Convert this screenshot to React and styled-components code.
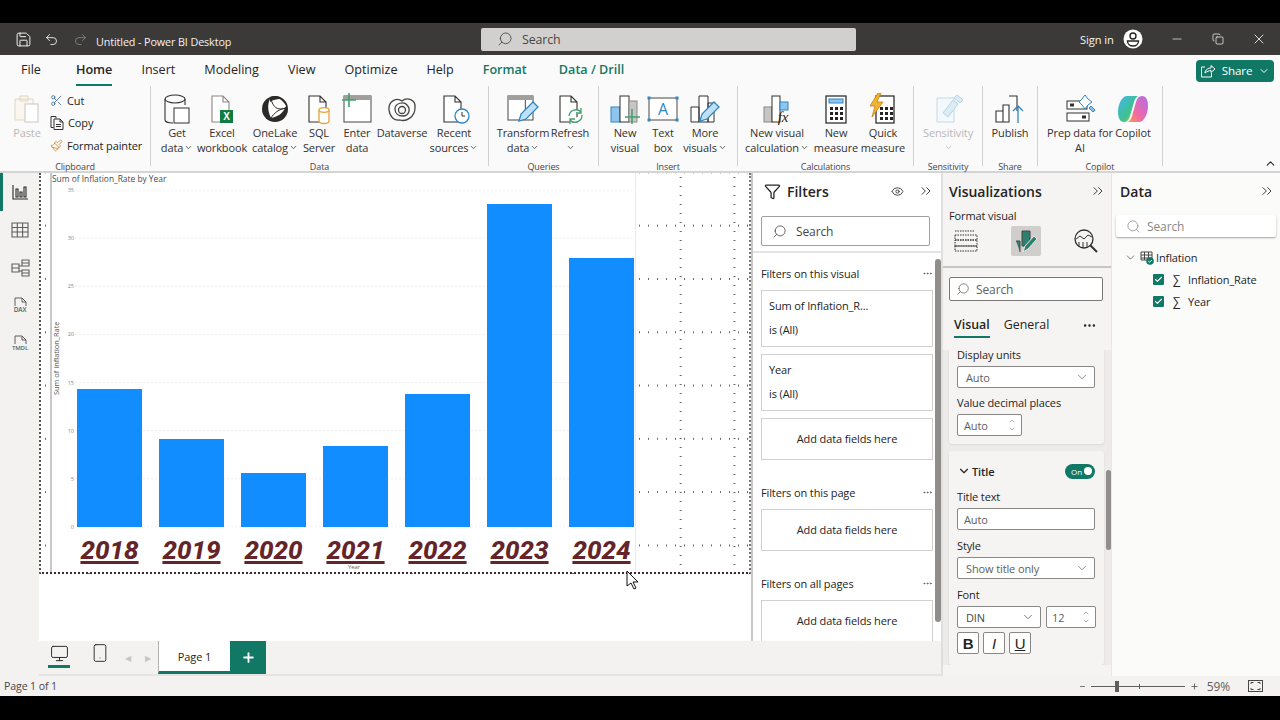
import styled, { createGlobalStyle } from 'styled-components'
import { Search, ChevronDown, ChevronUp, ChevronsRight, Minus, X, Copy, Scissors, Filter, Eye, Plus, Check, MoreHorizontal, Monitor, Smartphone, Undo2, Redo2, Save, Paintbrush } from 'lucide-react'

const green = '#117865'
const ui = '"Open Sans", "Noto Sans", sans-serif'

const GlobalStyle = createGlobalStyle`
  html, body { margin: 0; padding: 0; background: #000; }
  * { box-sizing: border-box; }
`

const Frame = styled.div`
  width: 1280px;
  height: 720px;
  background: #000;
  padding-top: 23px;
  font-family: ${ui};
  font-size: 11px;
  letter-spacing: -0.12px;
  color: #252423;
  display: flex;
  flex-direction: column;
  overflow: hidden;
`

/* title bar */
const TitleBar = styled.div`
  height: 32px;
  background: #3b3a39;
  display: flex;
  align-items: center;
  color: #f3f2f1;
  flex-shrink: 0;
`
const TitleLeft = styled.div`
  width: 481px;
  display: flex;
  align-items: center;
  padding-left: 15px;
`
const TitleIcon = styled.span`
  display: flex;
  width: ${p => p.$w || 29}px;
  opacity: ${p => (p.$dim ? 0.4 : 1)};
`
const TitleText = styled.span`
  margin: 5px 0 0 1px;
  font-size: 10.8px;
`
const TopSearch = styled.div`
  width: 375px;
  height: 23px;
  background: #d2d0ce;
  border-radius: 2px;
  display: flex;
  align-items: center;
  gap: 9px;
  padding-left: 16px;
  color: #484644;
  font-size: 12.4px;
`
const Flip = styled.span`
  display: flex;
  transform: scaleX(-1);
`
const TitleRight = styled.div`
  flex: 1;
  display: flex;
  align-items: center;
  padding-left: 224px;
  font-size: 11.2px;
  white-space: nowrap;
`
const Avatar = styled.svg`
  width: 20px;
  height: 20px;
  margin-left: 9px;
`
const WinBtn = styled.span`
  display: flex;
  justify-content: center;
  width: 41px;
  margin-left: ${p => (p.$first ? 14 : 0)}px;
`

/* tabs */
const TabRow = styled.div`
  height: 31px;
  background: #fafafa;
  display: flex;
  align-items: center;
  padding-left: 21px;
  flex-shrink: 0;
`
const Tab = styled.div`
  height: 31px;
  line-height: 30px;
  margin-right: ${p => p.$gap ?? 29}px;
  font-size: 12.6px;
  letter-spacing: 0;
  color: ${p => (p.$context ? green : '#252423')};
  font-weight: ${p => (p.$active || p.$context ? 600 : 400)};
  border-bottom: 2px solid ${p => (p.$active ? green : 'transparent')};
`
const ShareBtn = styled.div`
  margin-left: auto;
  margin-right: 6px;
  width: 78px;
  height: 22px;
  background: ${green};
  border-radius: 4px;
  color: #fff;
  display: flex;
  align-items: center;
  justify-content: center;
  gap: 6px;
  font-size: 11.6px;
`

/* ribbon */
const Ribbon = styled.div`
  height: 87px;
  background: #fafafa;
  border-bottom: 2px solid #d4d4d2;
  display: flex;
  flex-shrink: 0;
`
const Group = styled.div`
  width: ${p => p.$w}px;
  height: 80px;
  border-right: 1px solid #d2d0ce;
  display: flex;
  flex-direction: column;
  justify-content: space-between;
`
const GroupItems = styled.div`
  display: flex;
  padding-left: ${p => p.$pad || 0}px;
  padding-top: 7px;
`
const GroupLabel = styled.div`
  text-align: center;
  font-size: 9px;
  line-height: 12px;
  color: #484644;
  margin-bottom: -7px;
`
const RibbonBtn = styled.div`
  width: ${p => p.$w}px;
  display: flex;
  flex-direction: column;
  align-items: center;
  color: ${p => (p.$dim ? '#b9b8b6' : '#323130')};
  white-space: nowrap;
  line-height: 15px;
`
const RibbonIcon = styled.svg`
  width: 32px;
  height: 32px;
  flex-shrink: 0;
`
const BtnLine = styled.div`
  display: flex;
  align-items: center;
  gap: 1px;
  height: 15px;
`
const ClipRows = styled.div`
  display: flex;
  flex-direction: column;
  margin-top: -4px;
  padding-left: 4px;
`
const ClipRow = styled.div`
  height: 22.5px;
  display: flex;
  align-items: center;
  gap: 4px;
`
const CollapseBtn = styled.div`
  margin-left: auto;
  margin-right: 3px;
  align-self: flex-end;
  margin-bottom: 1px;
  display: flex;
`

/* body */
const Body = styled.div`
  height: 503px;
  display: flex;
  flex-shrink: 0;
`
const Rail = styled.div`
  width: 39px;
  background: #f3f2f1;
  display: flex;
  flex-direction: column;
`
const RailItem = styled.div`
  height: 38px;
  display: flex;
  align-items: center;
  justify-content: center;
  border-left: 3px solid ${p => (p.$active ? green : 'transparent')};
  padding-right: 3px;
`
const RailIcon = styled.svg`
  width: 22px;
  height: 22px;
`
const Center = styled.div`
  width: 902px;
  display: flex;
  flex-direction: column;
`
const Upper = styled.div`
  height: 468px;
  display: flex;
`
const Canvas = styled.div`
  width: 714px;
  background: #fff;
  border-right: 2px solid #c8c6c4;
`
const Page = styled.div`
  position: relative;
  height: 401px;
  padding-left: 9px;
  border-left: 2px dotted #555;
  border-right: 2px dotted #777;
  border-bottom: 2px dotted #3d2a30;
  background-color: #fff;
  background-image:
    radial-gradient(circle, #666 0.7px, transparent 1px),
    radial-gradient(circle, #666 0.7px, transparent 1px);
  background-size: 9px 53.3px, 53.8px 9px;
  background-position: 0 26px, 21px 0;
`
const Chart = styled.div`
  width: 586px;
  height: 399px;
  background: #fff;
  border-left: 2px solid #c8c8c8;
  border-right: 1px solid #e4ecf2;
  display: flex;
  flex-direction: column;
`
const ChartTitle = styled.div`
  height: 17px;
  font-size: 8.4px;
  line-height: 12px;
  letter-spacing: 0;
  font-weight: 500;
  color: #4a4a4a;
`
const ChartMain = styled.div`
  display: flex;
  height: 337px;
`
const AxisTitle = styled.div`
  writing-mode: vertical-rl;
  transform: rotate(180deg);
  width: 9px;
  font-size: 7.4px;
  line-height: 9px;
  letter-spacing: 0;
  font-weight: 500;
  text-align: center;
  color: #555;
`
const Ticks = styled.div`
  width: 10px;
  margin-left: 3px;
  display: flex;
  flex-direction: column;
  justify-content: space-between;
  margin-top: -4px;
  height: 345px;
`
const Tick = styled.div`
  font-size: 5.6px;
  line-height: 8px;
  color: #8a8a8a;
  text-align: right;
`
const Plot = styled.div`
  height: 337px;
  display: grid;
  grid-template-columns: repeat(7, 65px);
  column-gap: 17px;
  align-items: end;
  padding-left: 3px;
  width: 570px;
  background-image: radial-gradient(circle, #ececec 0.6px, transparent 0.8px);
  background-size: 4px 48.14px;
  background-position: 0 -24px;
`
const Bar = styled.div`
  background: #118dff;
`
const YearRow = styled.div`
  display: grid;
  grid-template-columns: repeat(7, 65px);
  column-gap: 17px;
  padding-left: 25px;
  margin-top: 10px;
`
const YearLabel = styled.div`
  font-family: Roboto, sans-serif;
  font-size: 26px;
  line-height: 26px;
  letter-spacing: 0;
  font-weight: 800;
  font-style: italic;
  text-decoration: underline;
  text-decoration-thickness: 3px;
  text-underline-offset: 2px;
  color: #642429;
  text-align: center;
  white-space: nowrap;
`
const XTitle = styled.div`
  font-size: 6px;
  line-height: 6px;
  margin-top: 1px;
  text-align: center;
  color: #666;
  padding-left: 21px;
`
const Pointer = styled.svg`
  position: absolute;
  left: 585px;
  top: 397px;
  width: 13px;
  height: 20px;
`

/* page tabs */
const PageTabs = styled.div`
  height: 35px;
  background: #f3f2f1;
  border-bottom: 2px solid #e6e4e2;
  display: flex;
  align-items: flex-start;
`
const ViewBtn = styled.div`
  width: ${p => p.$w}px;
  height: 27px;
  margin-left: ${p => p.$ml || 0}px;
  margin-right: ${p => p.$mr || 0}px;
  display: flex;
  align-items: center;
  justify-content: center;
  border-bottom: 3px solid ${p => (p.$active ? green : 'transparent')};
`
const Arrow = styled.div`
  width: 20px;
  height: 33px;
  display: flex;
  align-items: center;
  justify-content: center;
  color: #c8c6c4;
  font-size: 8px;
`
const PageTab = styled.div`
  width: 72px;
  height: 33px;
  background: #fff;
  border-left: 1px solid #b5b3b1;
  border-bottom: 3px solid ${green};
  display: flex;
  align-items: center;
  justify-content: center;
  font-size: 11px;
  font-weight: 500;
`
const AddPage = styled.div`
  width: 36px;
  height: 33px;
  background: ${green};
  color: #fff;
  display: flex;
  align-items: center;
  justify-content: center;
`

/* filters */
const Filters = styled.div`
  width: 188px;
  background: #fff;
  display: flex;
  flex-direction: column;
  position: relative;
  overflow: hidden;
`
const PaneHead = styled.div`
  height: 36px;
  display: flex;
  align-items: center;
  padding: ${p => p.$pad || '0 8px'};
  font-size: 14px;
  letter-spacing: 0;
  font-weight: 600;
  gap: ${p => p.$gap || 0}px;
  flex-shrink: 0;
`
const PushRight = styled.span`
  margin-left: auto;
  display: flex;
  align-items: center;
  gap: 14px;
`
const SearchBox = styled.div`
  display: flex;
  align-items: center;
  height: ${p => p.$h || 30}px;
  margin: ${p => p.$m || 0};
  padding-left: ${p => p.$pl || 10}px;
  gap: ${p => p.$g || 9}px;
  border: 1px solid ${p => p.$line || '#a19f9d'};
  border-radius: 2px;
  background: #fff;
  font-size: 12px;
  color: ${p => p.$color || '#484644'};
  flex-shrink: 0;
`
const FilterScroll = styled.div`
  margin-top: 5px;
  border-top: 2px solid #e4e4e2;
  padding: 0 8px;
  flex: 1;
`
const FilterHead = styled.div`
  display: flex;
  justify-content: space-between;
  align-items: center;
  height: 16px;
  margin-top: ${p => p.$mt}px;
  margin-bottom: 9px;
  width: 172px;
`
const FilterCard = styled.div`
  width: 172px;
  height: ${p => p.$h || 57}px;
  margin-bottom: 7px;
  border: 1px solid #d2d0ce;
  padding: 7px;
  display: flex;
  flex-direction: column;
  justify-content: ${p => (p.$empty ? 'center' : 'flex-start')};
  align-items: ${p => (p.$empty ? 'center' : 'flex-start')};
  gap: 8px;
  line-height: 16px;
`
const ScrollThumb = styled.div`
  position: absolute;
  right: 0;
  top: 86px;
  width: 6px;
  height: 363px;
  border-radius: 3px;
  background: #8f8e8c;
`

/* visualizations */
const Viz = styled.div`
  width: 170px;
  background: #f5f4f3;
  display: flex;
  flex-direction: column;
  border-left: 2px solid #e1dfdd;
`
const FormatLabel = styled.div`
  padding: 0 6px;
  font-weight: 500;
  line-height: 14px;
`
const VizIcons = styled.div`
  display: flex;
  align-items: center;
  justify-content: space-between;
  height: 34px;
  padding: 0 10px 0 8px;
  margin-top: 1px;
`
const VizIconBtn = styled.div`
  width: 30px;
  height: 30px;
  display: flex;
  align-items: center;
  justify-content: center;
  background: ${p => (p.$active ? '#cfcecc' : 'transparent')};
  border-radius: 2px;
`
const VizIcon = styled.svg`
  width: 26px;
  height: 26px;
`
const Notch = styled.div`
  height: 2px;
  margin-top: 8px;
  background: #c8c6c4;
  flex-shrink: 0;
`
const SubTabs = styled.div`
  display: flex;
  align-items: center;
  height: 26px;
  margin: 11px 14px 0 11px;
  gap: 14px;
  font-size: 12.4px;
  letter-spacing: 0;
  flex-shrink: 0;
`
const SubTab = styled.div`
  height: 26px;
  line-height: 26px;
  font-weight: ${p => (p.$active ? 600 : 400)};
  border-bottom: 2px solid ${p => (p.$active ? green : 'transparent')};
`
const VizScroll = styled.div`
  margin-top: 12px;
  height: 315px;
  flex-shrink: 0;
  overflow: hidden;
  position: relative;
  background: #ecebe9;
  padding: 0 7px 0 6px;
`
const VizThumb = styled.div`
  position: absolute;
  right: 0;
  top: 120px;
  width: 5px;
  height: 80px;
  border-radius: 3px;
  background: #8f8e8c;
`
const FormatCard = styled.div`
  width: 155px;
  height: ${p => p.$h}px;
  margin-top: ${p => p.$mt || 0}px;
  background: #f5f4f3;
  border-radius: 3px;
  padding: 0 8px;
  box-shadow: 0 1px 2px rgba(0, 0, 0, 0.08);
`
const FieldLabel = styled.div`
  line-height: 16px;
  margin-top: ${p => p.$mt || 0}px;
  margin-bottom: 3px;
`
const Select = styled.div`
  width: ${p => p.$w || 138}px;
  height: 22px;
  background: #fff;
  border: 1px solid #8a8886;
  border-radius: 2px;
  display: flex;
  align-items: center;
  justify-content: space-between;
  padding: 0 5px 0 ${p => p.$pl || 8}px;
  color: ${p => p.$color || '#605e5c'};
  flex-shrink: 0;
`
const SpinArrows = styled.span`
  display: flex;
  flex-direction: column;
  color: #8a8886;
`
const TitleRow = styled.div`
  display: flex;
  align-items: center;
  justify-content: space-between;
  width: 138px;
  height: 16px;
  margin-bottom: 10px;
  font-weight: 600;
`
const TitleName = styled.span`
  display: flex;
  align-items: center;
  gap: 1px;
`
const Toggle = styled.div`
  width: 30px;
  height: 15px;
  border-radius: 8px;
  background: ${green};
  color: #fff;
  font-size: 8px;
  font-weight: 400;
  display: flex;
  align-items: center;
  justify-content: flex-end;
  gap: 2px;
  padding-right: 3px;
`
const Knob = styled.span`
  width: 8px;
  height: 8px;
  border-radius: 50%;
  background: #fff;
`
const FontRow = styled.div`
  display: flex;
  gap: 5px;
  width: 138px;
`
const StyleRow = styled.div`
  display: flex;
  gap: 4px;
  margin-top: 4px;
`
const StyleBtn = styled.div`
  width: 22px;
  height: 22px;
  background: #fff;
  border: 1px solid #8a8886;
  border-radius: 2px;
  display: flex;
  align-items: center;
  justify-content: center;
  font-size: 15px;
  font-family: "Liberation Sans", sans-serif;
  font-weight: ${p => (p.$b ? 700 : 400)};
  font-style: ${p => (p.$i ? 'italic' : 'normal')};
  text-decoration: ${p => (p.$u ? 'underline' : 'none')};
`
const CardSpacer = styled.div`
  height: 12px;
`

/* data pane */
const DataPane = styled.div`
  width: 169px;
  background: #fbfbfa;
  border-left: 1px solid #e8e7e5;
`
const DataSearch = styled.div`
  margin: 6px 4px 0 4px;
  height: 22px;
  background: #fff;
  border-radius: 2px;
  box-shadow: 0 1px 2px rgba(0, 0, 0, 0.35);
  display: flex;
  align-items: center;
  gap: 6px;
  padding-left: 10px;
  font-size: 12px;
  color: #8a8886;
`
const TreeRow = styled.div`
  display: flex;
  align-items: center;
  height: 22px;
  padding-left: ${p => p.$pl}px;
  margin-top: ${p => p.$mt || 0}px;
`
const TreeIcon = styled.svg`
  width: 15px;
  height: 15px;
  margin: 0 1px 0 3px;
`
const FieldCheck = styled.span`
  width: 11px;
  height: 11px;
  background: ${green};
  border-radius: 1px;
  color: #fff;
  display: flex;
  align-items: center;
  justify-content: center;
`
const Sigma = styled.span`
  margin: 0 8px 0 9px;
  font-size: 12px;
  width: 7px;
`

/* status bar */
const StatusBar = styled.div`
  height: 20px;
  background: #f3f2f1;
  display: flex;
  align-items: center;
  padding: 0 17px 0 4px;
  color: #484644;
  flex-shrink: 0;
  font-size: 10.6px;
`
const ZoomArea = styled.div`
  margin-left: auto;
  display: flex;
  align-items: center;
`
const ZoomTrack = styled.div`
  width: 94px;
  height: 1px;
  background: #605e5c;
  margin: 0 5px;
  display: flex;
  align-items: center;
`
const ZoomThumb = styled.span`
  width: 4px;
  height: 11px;
  margin-left: 24px;
  background: #605e5c;
`
const ZoomMark = styled.span`
  width: 1px;
  height: 5px;
  margin-left: 20px;
  background: #605e5c;
`
const ZoomPct = styled.span`
  margin: 0 18px 0 8px;
  font-size: 12px;
  color: #605e5c;
`

/* ribbon drawings */
const stroke = { fill: 'none', stroke: '#323130', strokeWidth: 1.1 }
const Doc = ({ c = '#323130' }) => <path d="M6 3h11l6 6v20H6z M17 3v6h6" fill="#fff" stroke={c} strokeWidth="1.1" />
const Grid = ({ x, y, w, h, c = '#605e5c' }) => (
  <g fill="none" stroke={c} strokeWidth="1">
    <rect x={x} y={y} width={w} height={h} fill="#fff" />
    <path d={`M${x} ${y + h / 3}h${w}M${x} ${y + (2 * h) / 3}h${w}M${x + w / 3} ${y}v${h}M${x + (2 * w) / 3} ${y}v${h}`} />
  </g>
)
const Pencil = ({ x = 0, y = 0 }) => (
  <g transform={`translate(${x} ${y})`}>
    <path d="M4 24l2-7L18 5l5 5L11 22z" fill="#bfe0f5" stroke="#2f86c4" strokeWidth="1.3" />
  </g>
)

const PasteIcon = () => (
  <RibbonIcon viewBox="0 0 32 32">
    <path d="M4 6h18v21H4z M9 3h8v5H9z" fill="#fbf7ee" stroke="#e0d6c2" />
    <rect x="14" y="11" width="13" height="18" fill="#fff" stroke="#c8c6c4" />
  </RibbonIcon>
)
const GetDataIcon = () => (
  <RibbonIcon viewBox="0 0 32 32">
    <path d="M4 6v21c0 1.500 3 3 8 3M24 6v6" {...stroke} />
    <ellipse cx="14" cy="6" rx="10" ry="4" {...stroke} />
    <Grid x="13" y="15" w="15" h="15" c="#323130" />
  </RibbonIcon>
)
const ExcelIcon = () => (
  <RibbonIcon viewBox="0 0 32 32">
    <Doc c="#8a8886" />
    <rect x="14" y="17" width="13" height="13" fill="#107c41" />
    <text x="20.5" y="27" textAnchor="middle" fontSize="10" fontWeight="700" fill="#fff" fontFamily="Liberation Sans">X</text>
  </RibbonIcon>
)
const OneLakeIcon = () => (
  <RibbonIcon viewBox="0 0 32 32">
    <circle cx="16" cy="16" r="13" fill="#2b2a29" />
    <path d="M11 6c5-3 12-1 16 7-3 8-9 11-15 12-3-6-4-13-1-19z" fill="#fff" />
    <path d="M12 6c2 8 6 12 15 9M12 25c3-5 8-9 15-10" fill="none" stroke="#2b2a29" />
    <path d="M11 4c5-2 10-1 12 2-4 0-8 0-12 3z" fill="#2b2a29" />
  </RibbonIcon>
)
const SqlIcon = () => (
  <RibbonIcon viewBox="0 0 32 32">
    <Doc />
    <path d="M16 17v11c0 1.500 2.500 2.500 5 2.500s5-1 5-2.500V17" fill="#fff" stroke="#e8a33d" strokeWidth="1.300" />
    <ellipse cx="21" cy="17" rx="5" ry="2.300" fill="#fff" stroke="#e8a33d" strokeWidth="1.300" />
  </RibbonIcon>
)
const EnterIcon = () => (
  <RibbonIcon viewBox="0 0 32 32">
    <Grid x="3" y="3" w="27" h="26" c="#484644" />
    <rect x="3" y="3" width="27" height="4" fill="#a19f9d" />
    <path d="M8 0v14M1 7h14" stroke="#3fa06e" strokeWidth="1.600" />
  </RibbonIcon>
)
const DataverseIcon = () => (
  <RibbonIcon viewBox="0 0 32 32">
    <g fill="none" stroke="#484644" strokeWidth="1.300">
      <path d="M3 17C2 8 11 4 16 8c5-4 14-2 13 7 0 9-9 14-15 12C8 28 4 24 3 17z" />
      <path d="M9 16c0-6 9-8 12-4 4 4 2 11-4 11-5 0-8-3-8-7z" />
      <circle cx="16" cy="17" r="3.500" />
    </g>
  </RibbonIcon>
)
const RecentIcon = () => (
  <RibbonIcon viewBox="0 0 32 32">
    <Doc />
    <circle cx="24" cy="23" r="7" fill="#fff" stroke="#2f86c4" strokeWidth="1.300" />
    <path d="M24 19v4h3" fill="none" stroke="#323130" />
  </RibbonIcon>
)
const TransformIcon = () => (
  <RibbonIcon viewBox="0 0 32 32">
    <Grid x="1" y="3" w="25" h="24" c="#484644" />
    <rect x="1" y="3" width="25" height="4" fill="#a19f9d" />
    <Pencil x="8" y="4" />
  </RibbonIcon>
)
const RefreshIcon = () => (
  <RibbonIcon viewBox="0 0 32 32">
    <Doc />
    <path d="M15 23a7 7 0 0 1 12-4M28 22a7 7 0 0 1-12 5M27 15v5h-5M16 31v-5h5" fill="#fff" stroke="#3fa06e" strokeWidth="1.300" />
  </RibbonIcon>
)
const NewVisualIcon = () => (
  <RibbonIcon viewBox="0 0 32 32">
    <rect x="2" y="14" width="9" height="15" fill="#8ec5ee" stroke="#2f86c4" />
    <rect x="11" y="3" width="9" height="26" fill="#fff" stroke="#323130" />
    <rect x="20" y="8" width="8" height="21" fill="#c8c6c4" stroke="#8a8886" />
    <path d="M23 16v15M16 24h15" stroke="#3fa06e" strokeWidth="1.500" />
  </RibbonIcon>
)
const TextBoxIcon = () => (
  <RibbonIcon viewBox="0 0 32 32">
    <rect x="2" y="5" width="28" height="22" fill="#fff" stroke="#484644" />
    <g fill="#2f86c4">
      <rect x="0.500" y="3.500" width="3" height="3" /><rect x="28.500" y="3.500" width="3" height="3" />
      <rect x="0.500" y="25.500" width="3" height="3" /><rect x="28.500" y="25.500" width="3" height="3" />
    </g>
    <text x="16" y="22" textAnchor="middle" fontSize="16" fill="#2f86c4" fontFamily="Open Sans">A</text>
  </RibbonIcon>
)
const MoreIcon = () => (
  <RibbonIcon viewBox="0 0 32 32">
    <path d="M2 14h8v15H2zM10 3h9v26h-9zM19 10h6v19h-6z" fill="#fff" stroke="#323130" />
    <Pencil x="7" y="4" />
  </RibbonIcon>
)
const CalcIcon = () => (
  <RibbonIcon viewBox="0 0 32 32">
    <rect x="3" y="14" width="8" height="15" fill="#c8c6c4" stroke="#8a8886" />
    <rect x="11" y="3" width="8" height="26" fill="#fff" stroke="#323130" />
    <rect x="19" y="9" width="8" height="8" fill="#8ec5ee" stroke="#2f86c4" />
    <text x="22" y="29" textAnchor="middle" fontSize="15" fontStyle="italic" fontFamily="Liberation Serif" fill="#252423">fx</text>
  </RibbonIcon>
)
const Keys = () => (
  <g fill="#252423">
    {[14, 19, 24].map(y => [9, 14, 19].map(x => <rect key={`${x}-${y}`} x={x} y={y} width="3" height="3" />))}
  </g>
)
const MeasureIcon = () => (
  <RibbonIcon viewBox="0 0 32 32">
    <rect x="6" y="3" width="20" height="27" fill="#fff" stroke="#323130" strokeWidth="1.300" />
    <rect x="9" y="6" width="14" height="4" fill="#8ec5ee" stroke="#2f86c4" />
    <g transform="translate(1 0)"><Keys /></g>
  </RibbonIcon>
)
const QuickIcon = () => (
  <RibbonIcon viewBox="0 0 32 32">
    <rect x="9" y="3" width="18" height="27" fill="#fff" stroke="#323130" strokeWidth="1.300" />
    <g transform="translate(4 0)"><Keys /></g>
    <path d="M11 0L3 13h5L5 24l11-15h-6l4-9z" fill="#f2b233" stroke="#c87f0a" strokeWidth="0.800" />
  </RibbonIcon>
)
const SensitivityIcon = () => (
  <RibbonIcon viewBox="0 0 32 32">
    <path d="M5 5h17v24H5z" fill="#f2f8fb" stroke="#c0dbe8" />
    <path d="M11 20l10-13 5 4-10 13zM22 5l3-3 6 5-3 3z" fill="#dcecf4" stroke="#b7d4e2" />
  </RibbonIcon>
)
const PublishIcon = () => (
  <RibbonIcon viewBox="0 0 32 32">
    <path d="M2 18h7v11H2zM9 12h6v17H9zM15 3h8v15" fill="#fff" stroke="#323130" strokeWidth="1.100" />
    <path d="M19 18l5-5 5 5M24 13v17" fill="none" stroke="#2f86c4" strokeWidth="1.300" />
  </RibbonIcon>
)
const PrepIcon = () => (
  <RibbonIcon viewBox="0 0 32 32">
    <rect x="3" y="8" width="20" height="8" fill="#fff" stroke="#323130" />
    <rect x="3" y="20" width="22" height="8" fill="#fff" stroke="#323130" />
    <rect x="6" y="10.500" width="4" height="3" fill="#323130" /><rect x="18" y="22.500" width="4" height="3" fill="#323130" />
    <path d="M21 2l3 4 4 3-4 3-3 4-3-4-3-3 3-3z" fill="#fff" stroke="#2f86c4" />
    <path d="M27 13l2 2 2 2-2 2-2-2-2-2z" fill="#8ec5ee" stroke="#2f86c4" />
  </RibbonIcon>
)
const CopilotIcon = () => (
  <RibbonIcon viewBox="0 0 32 32">
    <defs>
      <linearGradient id="cpA" x1="0" y1="0" x2="1" y2="1">
        <stop offset="0" stopColor="#3fb6f0" /><stop offset="0.6" stopColor="#3fc28c" /><stop offset="1" stopColor="#f4c430" />
      </linearGradient>
      <linearGradient id="cpB" x1="1" y1="0" x2="0" y2="1">
        <stop offset="0" stopColor="#b06fe8" /><stop offset="0.6" stopColor="#ee6aa8" /><stop offset="1" stopColor="#f79a4d" />
      </linearGradient>
    </defs>
    <path d="M10 3h11c-2 1-3 3-4 6l-4 14c-1 4-3 6-6 6-4 0-6-4-6-10C1 11 5 3 10 3z" fill="url(#cpA)" />
    <path d="M22 29H11c2-1 3-3 4-6l4-14c1-4 3-6 6-6 4 0 6 4 6 10 0 8-4 16-9 16z" fill="url(#cpB)" />
  </RibbonIcon>
)
const CopyIcon = () => (
  <svg width="14" height="15" viewBox="0 0 14 15" fill="none" stroke="#323130">
    <path d="M3.500 12.500H1v-11h5v2" />
    <path d="M4 4h6l3 3v7.500H4zM10 4v3h3M6 9.500h5M6 11.500h5" />
  </svg>
)
const ShareGlyph = () => (
  <svg width="16" height="14" viewBox="0 0 16 14" fill="none" stroke="#fff" strokeWidth="1">
    <path d="M5 3H1.500v10h10V9" />
    <path d="M5 9c0-3 3-5 6-5V1.500l4 3.500-4 3.500V6.500c-2 0-4 1-6 2.500z" />
  </svg>
)

const DownMini = () => <ChevronDown size={9} strokeWidth={2} />

const RBtn = ({ w, icon, line1, line2, chevron, dim }) => (
  <RibbonBtn $w={w} $dim={dim}>
    {icon}
    <BtnLine>{line1}</BtnLine>
    <BtnLine>{line2}{chevron && <DownMini />}</BtnLine>
  </RibbonBtn>
)

const values = [14.33, 9.14, 5.6, 8.41, 13.8, 33.5, 27.95]
const years = [2018, 2019, 2020, 2021, 2022, 2023, 2024]
const ticks = [0, 5, 10, 15, 20, 25, 30, 35]
const pxPerUnit = 337 / 35

function App() {
  return (
    <Frame>
      <GlobalStyle />
      <TitleBar>
        <TitleLeft>
          <TitleIcon><Save size={17} strokeWidth={1.4} /></TitleIcon>
          <TitleIcon><Undo2 size={15} strokeWidth={1.4} /></TitleIcon>
          <TitleIcon $dim $w={22}><Redo2 size={15} strokeWidth={1.4} /></TitleIcon>
          <TitleText>Untitled - Power BI Desktop</TitleText>
        </TitleLeft>
        <TopSearch>
          <Flip><Search size={16} strokeWidth={1.3} /></Flip>
          Search
        </TopSearch>
        <TitleRight>
          Sign in
          <Avatar viewBox="0 0 20 20">
            <circle cx="10" cy="10" r="9.500" fill="#fff" />
            <circle cx="10" cy="7" r="3" fill="none" stroke="#252423" strokeWidth="1.400" />
            <path d="M4.500 12h11c0 3-2.500 5-5.500 5s-5.500-2-5.500-5z" fill="none" stroke="#252423" strokeWidth="1.400" />
          </Avatar>
          <WinBtn $first><Minus size={14} strokeWidth={1.2} /></WinBtn>
          <WinBtn><Copy size={12} strokeWidth={1.5} /></WinBtn>
          <WinBtn><X size={16} strokeWidth={1.3} /></WinBtn>
        </TitleRight>
      </TitleBar>

      <TabRow>
        <Tab $gap={35}>File</Tab>
        <Tab $active>Home</Tab>
        <Tab>Insert</Tab>
        <Tab>Modeling</Tab>
        <Tab>View</Tab>
        <Tab>Optimize</Tab>
        <Tab>Help</Tab>
        <Tab $context $gap={32}>Format</Tab>
        <Tab $context>Data / Drill</Tab>
        <ShareBtn>
          <ShareGlyph />
          Share
          <ChevronDown size={12} />
        </ShareBtn>
      </TabRow>

      <Ribbon>
        <Group $w={151}>
          <GroupItems $pad={8}>
            <RBtn w={38} icon={<PasteIcon />} line1="Paste" dim />
            <ClipRows>
              <ClipRow><Scissors size={13} strokeWidth={1.4} color="#2f5f8a" />Cut</ClipRow>
              <ClipRow><CopyIcon />Copy</ClipRow>
              <ClipRow><Paintbrush size={13} strokeWidth={1.5} color="#d18a2c" />Format painter</ClipRow>
            </ClipRows>
          </GroupItems>
          <GroupLabel>Clipboard</GroupLabel>
        </Group>
        <Group $w={338}>
          <GroupItems $pad={8}>
            <RBtn w={36} icon={<GetDataIcon />} line1="Get" line2="data" chevron />
            <RBtn w={54} icon={<ExcelIcon />} line1="Excel" line2="workbook" />
            <RBtn w={52} icon={<OneLakeIcon />} line1="OneLake" line2="catalog" chevron />
            <RBtn w={36} icon={<SqlIcon />} line1="SQL" line2="Server" />
            <RBtn w={40} icon={<EnterIcon />} line1="Enter" line2="data" />
            <RBtn w={50} icon={<DataverseIcon />} line1="Dataverse" />
            <RBtn w={54} icon={<RecentIcon />} line1="Recent" line2="sources" chevron />
          </GroupItems>
          <GroupLabel>Data</GroupLabel>
        </Group>
        <Group $w={110}>
          <GroupItems $pad={8}>
            <RBtn w={52} icon={<TransformIcon />} line1="Transform" line2="data" chevron />
            <RBtn w={42} icon={<RefreshIcon />} line1="Refresh" line2="" chevron />
          </GroupItems>
          <GroupLabel>Queries</GroupLabel>
        </Group>
        <Group $w={139}>
          <GroupItems $pad={8}>
            <RBtn w={36} icon={<NewVisualIcon />} line1="New" line2="visual" />
            <RBtn w={40} icon={<TextBoxIcon />} line1="Text" line2="box" />
            <RBtn w={44} icon={<MoreIcon />} line1="More" line2="visuals" chevron />
          </GroupItems>
          <GroupLabel>Insert</GroupLabel>
        </Group>
        <Group $w={176}>
          <GroupItems $pad={7}>
            <RBtn w={64} icon={<CalcIcon />} line1="New visual" line2="calculation" chevron />
            <RBtn w={54} icon={<MeasureIcon />} line1="New" line2="measure" />
            <RBtn w={40} icon={<QuickIcon />} line1="Quick" line2="measure" />
          </GroupItems>
          <GroupLabel>Calculations</GroupLabel>
        </Group>
        <Group $w={69}>
          <GroupItems>
            <RBtn w={68} icon={<SensitivityIcon />} line1="Sensitivity" line2="" chevron dim />
          </GroupItems>
          <GroupLabel>Sensitivity</GroupLabel>
        </Group>
        <Group $w={55}>
          <GroupItems>
            <RBtn w={54} icon={<PublishIcon />} line1="Publish" />
          </GroupItems>
          <GroupLabel>Share</GroupLabel>
        </Group>
        <Group $w={125}>
          <GroupItems $pad={7}>
            <RBtn w={70} icon={<PrepIcon />} line1="Prep data for" line2="AI" />
            <RBtn w={36} icon={<CopilotIcon />} line1="Copilot" />
          </GroupItems>
          <GroupLabel>Copilot</GroupLabel>
        </Group>
        <CollapseBtn><ChevronUp size={13} strokeWidth={2} /></CollapseBtn>
      </Ribbon>

      <Body>
        <Rail>
          <RailItem $active>
            <RailIcon viewBox="0 0 22 22" fill="none" stroke="#252423" strokeWidth="1.100">
              <path d="M4 4v14h15M7 8v8h2V8zM11 11v5h2v-5zM15 6v10h2V6z" />
            </RailIcon>
          </RailItem>
          <RailItem>
            <RailIcon viewBox="0 0 22 22" fill="none" stroke="#605e5c" strokeWidth="1.100">
              <path d="M3 4h16v14H3zM3 8.500h16M3 13h16M8.300 4v14M13.600 4v14" />
            </RailIcon>
          </RailItem>
          <RailItem>
            <RailIcon viewBox="0 0 22 22" fill="none" stroke="#605e5c" strokeWidth="1.100">
              <path d="M3 7h7v8H3zM3 11h7M13 3h7v6h-7zM13 6h7M13 13h7v6h-7zM13 16h7M10 9h3M10 14h3" />
            </RailIcon>
          </RailItem>
          <RailItem>
            <RailIcon viewBox="0 0 22 22" fill="none" stroke="#605e5c" strokeWidth="1">
              <path d="M6 11V3h7l4 4v4M13 3v4h4" />
              <text x="11" y="17" textAnchor="middle" fontSize="6.500" fontWeight="600" stroke="none" fill="#605e5c" fontFamily="Open Sans">DAX</text>
            </RailIcon>
          </RailItem>
          <RailItem>
            <RailIcon viewBox="0 0 22 22" fill="none" stroke="#605e5c" strokeWidth="1">
              <path d="M6 11V3h7l4 4v4M13 3v4h4" />
              <text x="11" y="17" textAnchor="middle" fontSize="6" fontWeight="600" stroke="none" fill="#605e5c" fontFamily="Open Sans">TMDL</text>
            </RailIcon>
          </RailItem>
        </Rail>

        <Center>
          <Upper>
            <Canvas>
              <Page>
                <Chart>
                  <ChartTitle>Sum of Inflation_Rate by Year</ChartTitle>
                  <ChartMain>
                    <AxisTitle>Sum of Inflation_Rate</AxisTitle>
                    <Ticks>
                      {[...ticks].reverse().map(t => <Tick key={t}>{t}</Tick>)}
                    </Ticks>
                    <Plot>
                      {values.map((v, i) => (
                        <Bar key={years[i]} style={{ height: v * pxPerUnit }} />
                      ))}
                    </Plot>
                  </ChartMain>
                  <YearRow>
                    {years.map(y => <YearLabel key={y}>{y}</YearLabel>)}
                  </YearRow>
                  <XTitle>Year</XTitle>
                </Chart>
                <Pointer viewBox="0 0 13 20">
                  <path d="M1 1v15l4-3 3 6 2-1-3-6h5z" fill="#fff" stroke="#111" strokeWidth="1" />
                </Pointer>
              </Page>
            </Canvas>

            <Filters>
              <PaneHead $pad="0 7px 0 11px" $gap={6}>
                <Filter size={17} strokeWidth={1.8} />
                Filters
                <PushRight>
                  <Eye size={13} strokeWidth={1.5} />
                  <ChevronsRight size={16} strokeWidth={1.3} />
                </PushRight>
              </PaneHead>
              <SearchBox $m="7px 11px 0 8px">
                <Flip><Search size={15} strokeWidth={1.3} /></Flip>
                Search
              </SearchBox>
              <FilterScroll>
                <FilterHead $mt={12}>Filters on this visual<MoreHorizontal size={11} color="#605e5c" /></FilterHead>
                <FilterCard>
                  <span>Sum of Inflation_R...</span>
                  <span>is (All)</span>
                </FilterCard>
                <FilterCard>
                  <span>Year</span>
                  <span>is (All)</span>
                </FilterCard>
                <FilterCard $empty $h={42}>Add data fields here</FilterCard>
                <FilterHead $mt={24}>Filters on this page<MoreHorizontal size={11} color="#605e5c" /></FilterHead>
                <FilterCard $empty $h={42}>Add data fields here</FilterCard>
                <FilterHead $mt={24}>Filters on all pages<MoreHorizontal size={11} color="#605e5c" /></FilterHead>
                <FilterCard $empty $h={42}>Add data fields here</FilterCard>
              </FilterScroll>
              <ScrollThumb />
            </Filters>
          </Upper>

          <PageTabs>
            <ViewBtn $w={22} $ml={9} $active><Monitor size={19} strokeWidth={1.2} /></ViewBtn>
            <ViewBtn $w={20} $ml={20} $mr={8}><Smartphone size={20} strokeWidth={1.1} /></ViewBtn>
            <Arrow>◀</Arrow>
            <Arrow>▶</Arrow>
            <PageTab>Page 1</PageTab>
            <AddPage><Plus size={15} strokeWidth={3} /></AddPage>
          </PageTabs>
        </Center>

        <Viz>
          <PaneHead $pad="0 5px 0 6px">
            Visualizations
            <PushRight><ChevronsRight size={16} strokeWidth={1.3} /></PushRight>
          </PaneHead>
          <FormatLabel>Format visual</FormatLabel>
          <VizIcons>
            <VizIconBtn>
              <VizIcon viewBox="0 0 26 26" fill="none" stroke="#323130" strokeWidth="1" strokeDasharray="1.500 1">
                <path d="M2 3h20M2 7h22v5H2zM2 12h22v6H2zM2 18h22v5H2z" />
              </VizIcon>
            </VizIconBtn>
            <VizIconBtn $active>
              <VizIcon viewBox="0 0 26 26">
                <path d="M3 13h4v11M9 3h8v15H9z" fill="#2f7f6e" stroke="#484644" />
                <path d="M10 24l2-6 9-10 3 3-9 10z" fill="#2f7f6e" stroke="#e8e8e8" />
              </VizIcon>
            </VizIconBtn>
            <VizIconBtn>
              <VizIcon viewBox="0 0 26 26" fill="none" stroke="#323130" strokeWidth="1.300">
                <circle cx="11" cy="11" r="9" />
                <path d="M17 17l7 7" strokeWidth="2" />
                <path d="M3 11l4-3 4 3 4-4 4 2M6 19v-5M10 20v-6M14 19v-5" strokeWidth="1" />
              </VizIcon>
            </VizIconBtn>
          </VizIcons>
          <Notch />
          <SearchBox $h={24} $m="9px 8px 0 6px" $pl={6} $g={6} $line="#7a7876" $color="#605e5c">
            <Flip><Search size={14} strokeWidth={1.3} /></Flip>
            Search
          </SearchBox>
          <SubTabs>
            <SubTab $active>Visual</SubTab>
            <SubTab>General</SubTab>
            <PushRight><MoreHorizontal size={15} /></PushRight>
          </SubTabs>
          <VizScroll>
            <FormatCard $h={97} $mt={-3}>
              <FieldLabel>Display units</FieldLabel>
              <Select>Auto<ChevronDown size={14} strokeWidth={1.2} /></Select>
              <FieldLabel $mt={7}>Value decimal places</FieldLabel>
              <Select $w={65} $pl={6}>Auto<SpinArrows><ChevronUp size={8} /><ChevronDown size={8} /></SpinArrows></Select>
            </FormatCard>
            <FormatCard $h={214} $mt={7}>
              <CardSpacer />
              <TitleRow>
                <TitleName><ChevronDown size={14} strokeWidth={2} />Title</TitleName>
                <Toggle>On<Knob /></Toggle>
              </TitleRow>
              <FieldLabel>Title text</FieldLabel>
              <Select $pl={6}>Auto</Select>
              <FieldLabel $mt={8}>Style</FieldLabel>
              <Select>Show title only<ChevronDown size={14} strokeWidth={1.2} /></Select>
              <FieldLabel $mt={8}>Font</FieldLabel>
              <FontRow>
                <Select $w={84} $color="#484644">DIN<ChevronDown size={14} strokeWidth={1.2} /></Select>
                <Select $w={50} $pl={5}>12<SpinArrows><ChevronUp size={8} /><ChevronDown size={8} /></SpinArrows></Select>
              </FontRow>
              <StyleRow>
                <StyleBtn $b>B</StyleBtn>
                <StyleBtn $i>I</StyleBtn>
                <StyleBtn $u>U</StyleBtn>
              </StyleRow>
            </FormatCard>
            <VizThumb />
          </VizScroll>
        </Viz>

        <DataPane>
          <PaneHead $pad="0 5px 0 8px">
            Data
            <PushRight><ChevronsRight size={16} strokeWidth={1.3} /></PushRight>
          </PaneHead>
          <DataSearch>
            <Search size={15} strokeWidth={1.2} />
            Search
          </DataSearch>
          <TreeRow $pl={12} $mt={9}>
            <ChevronDown size={13} strokeWidth={1.1} />
            <TreeIcon viewBox="0 0 15 15">
              <path d="M1 2h11v8H1zM1 5h11M1 8h11M4.500 2v8M8.500 2v8" fill="none" stroke="#484644" />
              <circle cx="10" cy="11" r="3.800" fill={green} />
              <path d="M8.200 11l1.300 1.300 2.300-2.300" fill="none" stroke="#fff" strokeWidth="0.900" />
            </TreeIcon>
            Inflation
          </TreeRow>
          <TreeRow $pl={41}>
            <FieldCheck><Check size={9} strokeWidth={3} /></FieldCheck>
            <Sigma>∑</Sigma>Inflation_Rate
          </TreeRow>
          <TreeRow $pl={41}>
            <FieldCheck><Check size={9} strokeWidth={3} /></FieldCheck>
            <Sigma>∑</Sigma>Year
          </TreeRow>
        </DataPane>
      </Body>

      <StatusBar>
        Page 1 of 1
        <ZoomArea>
          <Minus size={7} strokeWidth={2.5} />
          <ZoomTrack>
            <ZoomThumb />
            <ZoomMark />
          </ZoomTrack>
          <Plus size={9} strokeWidth={2} />
          <ZoomPct>59%</ZoomPct>
          <svg width="15" height="12" viewBox="0 0 15 12" fill="none" stroke="#484644">
            <rect x="0.500" y="0.500" width="14" height="11" />
            <path d="M3 4V2.500h2.500M12 4V2.500H9.500M3 8v1.500h2.500M12 8v1.500H9.500" />
          </svg>
        </ZoomArea>
      </StatusBar>
    </Frame>
  )
}

export default App
